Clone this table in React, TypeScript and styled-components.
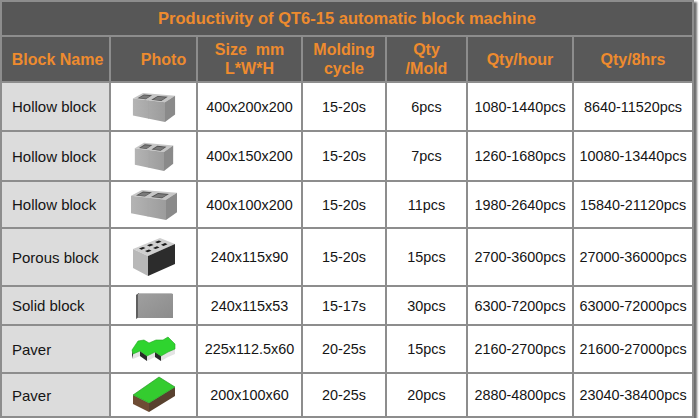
import React from "react";
import styled, { createGlobalStyle } from "styled-components";

const GlobalStyle = createGlobalStyle`
  html, body {
    margin: 0;
    padding: 0;
    background: #ffffff;
  }
  body {
    font-family: "Liberation Sans", Arial, sans-serif;
  }
`;

type Kind = "hollow1" | "hollow2" | "hollow3" | "porous" | "solid" | "zigzag" | "brick";

interface Row {
  name: string;
  photo: Kind;
  size: string;
  cycle: string;
  perMold: string;
  perHour: string;
  per8: string;
}

const rows: Row[] = [
  { name: "Hollow block", photo: "hollow1", size: "400x200x200", cycle: "15-20s", perMold: "6pcs", perHour: "1080-1440pcs", per8: "8640-11520pcs" },
  { name: "Hollow block", photo: "hollow2", size: "400x150x200", cycle: "15-20s", perMold: "7pcs", perHour: "1260-1680pcs", per8: "10080-13440pcs" },
  { name: "Hollow block", photo: "hollow3", size: "400x100x200", cycle: "15-20s", perMold: "11pcs", perHour: "1980-2640pcs", per8: "15840-21120pcs" },
  { name: "Porous block", photo: "porous", size: "240x115x90", cycle: "15-20s", perMold: "15pcs", perHour: "2700-3600pcs", per8: "27000-36000pcs" },
  { name: "Solid block", photo: "solid", size: "240x115x53", cycle: "15-17s", perMold: "30pcs", perHour: "6300-7200pcs", per8: "63000-72000pcs" },
  { name: "Paver", photo: "zigzag", size: "225x112.5x60", cycle: "20-25s", perMold: "15pcs", perHour: "2160-2700pcs", per8: "21600-27000pcs" },
  { name: "Paver", photo: "brick", size: "200x100x60", cycle: "20-25s", perMold: "20pcs", perHour: "2880-4800pcs", per8: "23040-38400pcs" },
];

const Sheet = styled.div`
  display: grid;
  width: 690px;
  grid-template-columns: 107px 85px 103px 82px 79px 104px 118px;
  grid-template-rows: 33px 44px 47px 48px 45px 56px 37px 46px 42px;
  gap: 2px;
  padding: 2px;
  background: #8d8d8d;
  box-shadow: 3px 2px 2px #6e6e6e;
`;

const TitleCell = styled.div`
  grid-column: 1 / -1;
  background: #575757;
  color: #ee8b2e;
  font-weight: bold;
  font-size: 16.5px;
  display: flex;
  align-items: center;
  justify-content: center;
  padding-bottom: 1px;
`;

const HeadCell = styled.div<{ $shift?: number }>`
  background: #595959;
  color: #ee8b2e;
  font-weight: bold;
  font-size: 16px;
  line-height: 19px;
  display: flex;
  align-items: center;
  justify-content: center;
  text-align: center;
  padding-left: ${(p) => p.$shift ?? 0}px;
`;

const NameCell = styled.div`
  background: #dcdcdc;
  color: #151515;
  font-size: 15px;
  display: flex;
  align-items: center;
  padding-left: 10px;
`;

const PhotoCell = styled.div`
  background: #ffffff;
  display: flex;
  align-items: center;
  justify-content: center;
`;

const ValueCell = styled.div`
  background: #ffffff;
  color: #151515;
  font-size: 14.4px;
  display: flex;
  align-items: center;
  justify-content: center;
  white-space: nowrap;
`;

const HollowBlock = ({ w, h }: { w: number; h: number }) => (
  <svg width={w} height={h} viewBox="0 0 48 34" preserveAspectRatio="none">
    <defs>
      <linearGradient id="hbFront" x1="0" y1="0" x2="1" y2="0">
        <stop offset="0" stopColor="#b4b4b4" />
        <stop offset="1" stopColor="#9c9c9c" />
      </linearGradient>
    </defs>
    <polygon points="1,8 12,2 47,5 36,12" fill="#c6c6c6" />
    <polygon points="1,8 36,12 36,33 1,26" fill="url(#hbFront)" />
    <polygon points="36,12 47,5 47,25 36,33" fill="#8a8a8a" />
    <polygon points="6,7.6 13,3.6 22,4.4 15,8.8" fill="#505050" />
    <polygon points="8,7.4 13,4.6 20,5.2 15,8.2" fill="#7a7a7a" />
    <polygon points="21,9.4 28,5.2 39,6.2 32,10.6" fill="#505050" />
    <polygon points="23,9.2 28,6.2 37,7 32,9.9" fill="#7a7a7a" />
    <line x1="18" y1="10" x2="18" y2="29.5" stroke="#a6a6a6" strokeWidth="0.7" />
  </svg>
);

const PorousBlock = () => (
  <svg width="44" height="40" viewBox="0 0 44 40">
    <polygon points="1,12 28,1 43,7 16,19" fill="#cfcfcf" />
    <polygon points="1,12 16,19 16,39 1,31" fill="#b8b8b8" />
    <polygon points="16,19 43,7 43,27 16,39" fill="#2c2c2c" />
    {[0, 1, 2].map((i) =>
      [0, 1].map((j) => {
        const x = 7 + i * 8 + j * 6;
        const y = 11.5 - i * 3.2 + j * 2.6;
        return (
          <polygon
            key={`${i}-${j}`}
            points={`${x},${y} ${x + 4},${y - 1.6} ${x + 6.5},${y - 0.4} ${x + 2.5},${y + 1.2}`}
            fill="#1b1b1b"
          />
        );
      })
    )}
  </svg>
);

const SolidBlock = () => (
  <svg width="40" height="28" viewBox="0 0 40 28">
    <defs>
      <linearGradient id="sbFront" x1="0" y1="0" x2="1" y2="1">
        <stop offset="0" stopColor="#9f9f9f" />
        <stop offset="1" stopColor="#8c8c8c" />
      </linearGradient>
    </defs>
    <polygon points="2,3 5,1 39,1 36,3" fill="#bdbdbd" />
    <polygon points="2,3 5,1 5,25 2,27" fill="#5f5f5f" />
    <rect x="4" y="2" width="35" height="24" fill="url(#sbFront)" />
  </svg>
);

// top face of the interlocking paver, its lower outline repeated 5px down for the sides
const zigTop = "2,15 8,6 14,5 19,8 26,5 33,5 38,2 45,9 45,14 38,17 31,21 25,17 17,21 10,16 3,19";

const ZigzagPaver = () => (
  <svg width="48" height="28" viewBox="0 0 48 28">
    <polygon points="2,15 3,19 10,16 17,21 25,17 31,21 38,17 45,14 45,19 38,22 31,26 25,22 17,26 10,21 3,24 2,20" fill="#e4e4e4" />
    <polygon points="10,16 17,21 17,26 10,21" fill="#2a2a2a" />
    <polygon points="25,17 31,21 31,26 25,22" fill="#2a2a2a" />
    <polygon points="2,15 3,19 3,24 2,20" fill="#3a3a3a" />
    <polygon points={zigTop} fill="#2fd42f" stroke="#21a521" strokeWidth="0.6" />
  </svg>
);

const BrickPaver = () => (
  <svg width="44" height="38" viewBox="0 0 44 38">
    <polygon points="1,19 17,27 17,36 1,28" fill="#6e4c34" />
    <polygon points="17,27 43,11 43,20 17,36" fill="#58412f" />
    <polygon points="1,19 27,1 43,11 17,27" fill="#34cc2f" stroke="#1f8f1f" strokeWidth="0.6" />
  </svg>
);

const Photo = ({ kind }: { kind: Kind }) => {
  switch (kind) {
    case "hollow1":
      return <HollowBlock w={44} h={32} />;
    case "hollow2":
      return <HollowBlock w={40} h={31} />;
    case "hollow3":
      return <HollowBlock w={48} h={33} />;
    case "porous":
      return <PorousBlock />;
    case "solid":
      return <SolidBlock />;
    case "zigzag":
      return <ZigzagPaver />;
    default:
      return <BrickPaver />;
  }
};

export default function App() {
  return (
    <>
      <GlobalStyle />
      <Sheet>
        <TitleCell>Productivity of QT6-15 automatic block machine</TitleCell>
        <HeadCell $shift={4}>Block Name</HeadCell>
        <HeadCell $shift={20}>Photo</HeadCell>
        <HeadCell>
          Size&nbsp;&nbsp;mm
          <br />
          L*W*H
        </HeadCell>
        <HeadCell>
          Molding
          <br />
          cycle
        </HeadCell>
        <HeadCell>
          Qty
          <br />
          /Mold
        </HeadCell>
        <HeadCell>Qty/hour</HeadCell>
        <HeadCell>Qty/8hrs</HeadCell>
        {rows.map((r, i) => (
          <React.Fragment key={i}>
            <NameCell>{r.name}</NameCell>
            <PhotoCell>
              <Photo kind={r.photo} />
            </PhotoCell>
            <ValueCell>{r.size}</ValueCell>
            <ValueCell>{r.cycle}</ValueCell>
            <ValueCell>{r.perMold}</ValueCell>
            <ValueCell>{r.perHour}</ValueCell>
            <ValueCell>{r.per8}</ValueCell>
          </React.Fragment>
        ))}
      </Sheet>
    </>
  );
}
